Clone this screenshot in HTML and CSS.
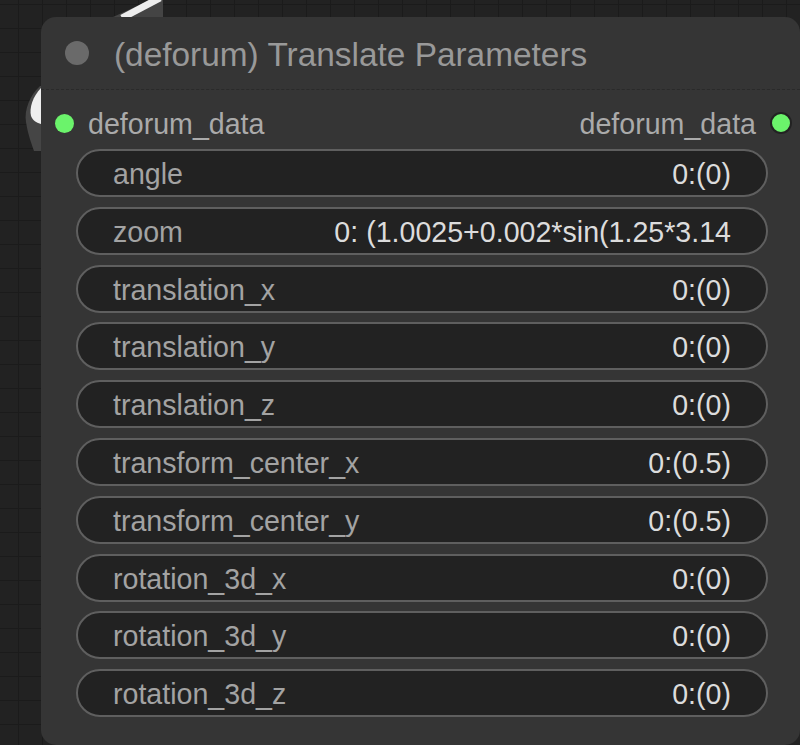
FILE: index.html
```html
<!DOCTYPE html>
<html>
<head>
<meta charset="utf-8">
<link rel="stylesheet" href="styles.css">
</head>
<body>
<div class="canvas">
  <svg class="wires" width="800" height="745" viewBox="0 0 800 745">
    <polygon points="113,17 163,17 163,0 150,0" fill="#444"/>
    <line x1="122" y1="18" x2="160" y2="-2" stroke="#ededed" stroke-width="7"/>
    <path d="M40,86 C30,95 24,110 26,122 C28,135 32,145 34,151 L42,151 L42,86 Z" fill="#454545"/>
    <path d="M41,88 C33,96 29,108 31,116 C33,121 37,123 41,124 Z" fill="#eeeeee"/>
  </svg>
  <div class="node">
    <div class="title">
      <span class="title-dot"></span>
      <span class="title-text">(deforum) Translate Parameters</span>
    </div>
    <div class="body">
      <div class="slots">
        <div class="slot in"><span class="dot"></span><span class="slot-text">deforum_data</span></div>
        <div class="slot out"><span class="slot-text">deforum_data</span><span class="dot ring"></span></div>
      </div>
      <div class="widgets">
        <div class="widget"><span class="label">angle</span><span class="value">0:(0)</span></div>
        <div class="widget"><span class="label">zoom</span><span class="value">0: (1.0025+0.002*sin(1.25*3.14</span></div>
        <div class="widget"><span class="label">translation_x</span><span class="value">0:(0)</span></div>
        <div class="widget"><span class="label">translation_y</span><span class="value">0:(0)</span></div>
        <div class="widget"><span class="label">translation_z</span><span class="value">0:(0)</span></div>
        <div class="widget"><span class="label">transform_center_x</span><span class="value">0:(0.5)</span></div>
        <div class="widget"><span class="label">transform_center_y</span><span class="value">0:(0.5)</span></div>
        <div class="widget"><span class="label">rotation_3d_x</span><span class="value">0:(0)</span></div>
        <div class="widget"><span class="label">rotation_3d_y</span><span class="value">0:(0)</span></div>
        <div class="widget"><span class="label">rotation_3d_z</span><span class="value">0:(0)</span></div>
      </div>
    </div>
  </div>
</div>
</body>
</html>
```
FILE: styles.css
```css
html, body {
  margin: 0;
  padding: 0;
  background: #222;
}
.canvas {
  position: relative;
  width: 800px;
  height: 745px;
  overflow: hidden;
  background-color: #222;
  background-image:
    linear-gradient(to right, #1b1b1b 1px, transparent 1px),
    linear-gradient(to bottom, #1b1b1b 1px, transparent 1px);
  background-size: 24px 24px;
  background-position: 18px 4px;
  font-family: "Liberation Sans", Arial, sans-serif;
}
.wires {
  position: absolute;
  left: 0;
  top: 0;
}
.node {
  position: absolute;
  left: 41px;
  top: 17px;
  width: 759px;
  height: 728px;
  background: #353535;
  border-radius: 15px;
  box-sizing: border-box;
}
.title {
  height: 72px;
  border-bottom: 1px dashed #2a2a2a;
  display: flex;
  align-items: center;
  padding-left: 24px;
}
.title-dot {
  width: 24px;
  height: 24px;
  border-radius: 50%;
  background: #6a6a6a;
  margin-right: 25px;
}
.title-text {
  color: #999;
  font-size: 33.4px;
  line-height: 1;
  padding-top: 3px;
}
.body {
  padding-top: 10px;
}
.slots {
  height: 46px;
  display: flex;
  justify-content: space-between;
  align-items: center;
  font-size: 28.6px;
  color: #aaa;
}
.slot {
  display: flex;
  align-items: center;
}
.slot-text {
  padding-top: 3px;
}
.slot.in {
  padding-left: 14px;
}
.slot.in .dot {
  margin-right: 14px;
}
.slot.out {
  padding-right: 8px;
}
.slot.out .dot {
  margin-left: 14px;
}
.dot {
  width: 19px;
  height: 19px;
  border-radius: 50%;
  background: #6bf36b;
  box-sizing: border-box;
}
.dot.ring {
  width: 22px;
  height: 22px;
  border: 2px solid #222;
}
.widgets {
  margin-top: 3px;
  padding-left: 35px;
  padding-right: 32px;
  display: flex;
  flex-direction: column;
  gap: 9.8px;
}
.widget {
  height: 48px;
  box-sizing: border-box;
  border: 2px solid #5f5f5f;
  border-radius: 24px;
  background: #222;
  display: flex;
  align-items: center;
  justify-content: space-between;
  padding: 3px 35px 0;
  font-size: 28.6px;
  white-space: nowrap;
  overflow: hidden;
}
.label {
  color: #a3a3a3;
}
.value {
  color: #dcdcdc;
}
```
